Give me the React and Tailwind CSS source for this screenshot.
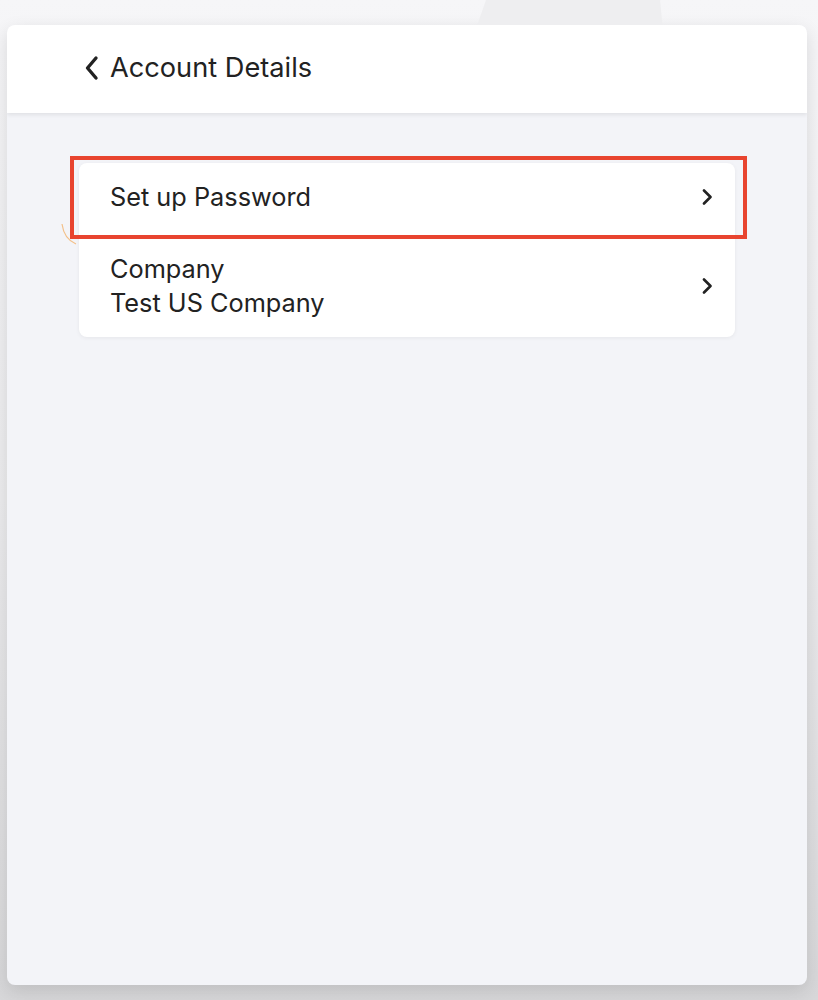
const font = { fontFamily: 'Inter, "Noto Sans", sans-serif' };

function Chevron() {
  return (
    <svg width="12" height="16" viewBox="0 0 12 16" fill="none">
      <path d="M3 1.5 L9.5 8 L3 14.5" stroke="#222" strokeWidth="2.6" strokeLinecap="round" strokeLinejoin="round" />
    </svg>
  );
}

export default function App() {
  return (
    <div
      className="relative w-[818px] h-[1000px] overflow-hidden bg-gradient-to-b from-[#f6f6f8] via-[#ececee] to-[#d7d7d9]"
      style={font}
    >
      {/* faint backdrop shape */}
      <svg className="absolute left-0 top-0" width="818" height="40">
        <polygon points="486,0 660,0 664,40 472,40" fill="#eeeef0" />
      </svg>

      <div className="pt-[25px] pr-[11px] pl-[7px]">
        <div className="h-[960px] rounded-lg overflow-hidden bg-[#f3f4f8] shadow-[0_6px_18px_rgba(0,0,0,0.12)] flex flex-col">
          {/* HEADER */}
          <div className="h-[88px] bg-white flex items-center pl-[76px] pb-[2px] shadow-[0_2px_4px_rgba(0,0,0,0.08)] relative z-10">
            <svg width="18" height="26" viewBox="0 0 18 26" fill="none">
              <path d="M13 3 L4.5 13 L13 23" stroke="#222" strokeWidth="3.4" strokeLinecap="round" strokeLinejoin="round" />
            </svg>
            <span className="ml-[9px] text-[27.2px] text-[#222]">Account Details</span>
          </div>

          {/* LIST */}
          <div className="pt-[50px] px-[72px]">
            <div className="relative bg-white rounded-lg shadow-[0_1px_4px_rgba(0,0,0,0.06)]">
              <div className="h-[80px] flex items-center justify-between pl-[31px] pr-[22px] pb-[12px]">
                <span className="text-[25.3px] text-[#222]">Set up Password</span>
                <Chevron />
              </div>
              <div className="h-[94px] flex items-center justify-between pl-[31px] pr-[22px] pb-[8px]">
                <div className="text-[25.3px] leading-[34px] text-[#222]">
                  <div>Company</div>
                  <div>Test US Company</div>
                </div>
                <Chevron />
              </div>

              {/* highlight box */}
              <div className="absolute left-[-9px] right-[-12px] top-[-7px] h-[83px] border-[4px] border-[#e8442f]" />
              <svg className="absolute left-[-18px] top-[60px]" width="16" height="22">
                <path d="M1 1 Q3 16 15 21" stroke="#f3c089" strokeWidth="1.2" fill="none" />
              </svg>
            </div>
          </div>
        </div>
      </div>
    </div>
  );
}
